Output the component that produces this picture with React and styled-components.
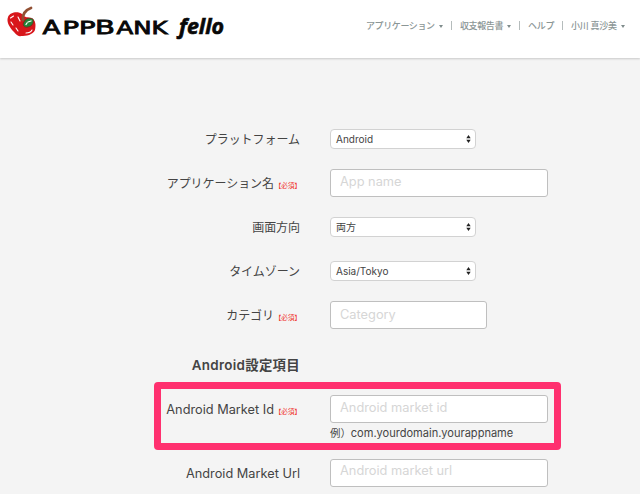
import React from "react";
import styled, { createGlobalStyle } from "styled-components";

const Global = createGlobalStyle`
  *, *::after { box-sizing: border-box; }
  body {
    margin: 0;
    background: #f4f4f4;
    color: #444;
    font-family: Inter, "Noto Sans CJK JP", sans-serif;
    overflow: hidden;
  }
`;

const Page = styled.div`
  width: 640px;
  height: 494px;
  overflow: hidden;
  background: #f4f4f4;
`;

const Header = styled.header`
  display: flex;
  justify-content: space-between;
  height: 58px;
  background: #fff;
  box-shadow: 0 1px 2px rgba(0, 0, 0, 0.18);
`;

const Logo = styled.svg`
  display: block;
  width: 240px;
  height: 50px;
  flex: none;
`;

const Nav = styled.nav`
  display: flex;
  align-items: center;
  height: 51px;
  padding-right: 15px;
  font-family: "Noto Sans CJK JP", sans-serif;
  font-size: 9px;
  font-weight: 500;
  line-height: 12px;
  color: #8b9696;
`;

const NavItem = styled.a`
  display: flex;
  align-items: center;
  justify-content: space-between;
  width: ${(p) => p.$width}px;
  white-space: nowrap;
  letter-spacing: ${(p) => p.$spacing || 0}px;
`;

const Caret = styled.i`
  margin-top: 1px;
  border: solid transparent;
  border-width: 3px 2.5px 0;
  border-top-color: #7f8c8c;
`;

const Divider = styled.i`
  width: 1px;
  height: 9px;
  margin: 0 8px;
  background: #b5bcbc;
`;

const Form = styled.form`
  padding-top: 59px;
`;

const Row = styled.div`
  position: relative;
  display: grid;
  grid-template-columns: 300px 1fr;
  grid-template-rows: 44px;
  column-gap: 30px;
  align-items: center;
`;

const HighlightedRow = styled(Row)`
  grid-template-rows: 44px 20px;

  &::after {
    content: "";
    position: absolute;
    left: 154px;
    top: -5px;
    width: 407px;
    height: 68px;
    border: 7px solid #ff306f;
    border-radius: 4px;
  }
`;

const Label = styled.label`
  display: flex;
  justify-content: flex-end;
  align-items: center;
  padding-top: 2px;
  white-space: nowrap;
  font-size: 12px;
  line-height: 16px;
  letter-spacing: -0.05px;
`;

const LatinLabel = styled(Label)`
  font-size: 12.75px;
  letter-spacing: 0;
`;

const Required = styled.span`
  width: 22px;
  margin: 2px 0 0 4px;
  font-family: "Noto Sans CJK JP", sans-serif;
  font-size: 6.6px;
  font-feature-settings: "halt";
  line-height: 8px;
  letter-spacing: 0;
  color: #f0352c;
`;

const Heading = styled.h2`
  width: 300px;
  height: 50px;
  margin: 0;
  padding-top: 20px;
  text-align: right;
  font-size: 13.4px;
  font-weight: 600;
  line-height: 17px;
  letter-spacing: 0.3px;
`;

const Select = styled.div`
  display: flex;
  align-items: center;
  justify-content: space-between;
  width: 146px;
  height: 20px;
  padding: 0 4px 1px 5px;
  border: 1px solid #d2d2d2;
  border-radius: 4px;
  background: #fff;
  font-size: 10px;
  line-height: 14px;
`;

const Input = styled.input`
  width: ${(p) => p.$width || 218}px;
  height: 28px;
  padding: 0 9px ${(p) => p.$lift ?? 4}px;
  border: 1px solid #bfbfbf;
  border-radius: 3px;
  background: #fff;
  color: #444;
  font: 12.8px Inter, "Noto Sans CJK JP", sans-serif;
  outline: 0;

  &::placeholder {
    color: #d6d6d6;
    opacity: 1;
  }
`;

const Hint = styled.p`
  grid-column: 2;
  align-self: start;
  margin: -6px 0 0;
  font-size: 10.4px;
  line-height: 16px;
  white-space: nowrap;
`;

const HintSample = styled.span`
  font-size: 11.05px;
`;

const Brand = () => (
  <Logo viewBox="0 0 240 50" aria-label="AppBank fello">
    <path d="M22 14C18 11 10 12 8 17c-2 5 2 11 6 15 2 2 4 5 7 4 5 0 12-1 14-6 1-5 1-10-4-12-3-1-6 0-9-4Z" fill="#d8161b" />
    <path d="M23 20c-1-5 2-10 8-12" fill="none" stroke="#925033" strokeWidth="2.8" strokeLinecap="round" />
    <path d="M24 22c1-3 5-5 9-3 1 3 0 7-5 8-4 1-6-2-4-5Z" fill="#258339" stroke="#742818" strokeWidth="0.8" />
    <path d="m26 24.5 1-1.5M28 22l3-1" stroke="#fff" strokeWidth="1.3" strokeLinecap="round" />
    <path d="m10.5 18 3-2M11 22l2 3M16 28l2 3M26 33c3 0 5-1 6-3M18 17l2 4" fill="none" stroke="#fff" strokeWidth="1.1" strokeLinecap="round" />
    <g fill="#080808" stroke="#080808" strokeWidth="0.8" fontFamily="DejaVu Sans, sans-serif">
      <text x="42.5" y="33.7" fontSize="19.5" textLength="18" lengthAdjust="spacingAndGlyphs">A</text>
      <text x="62.5" y="33.7" fontSize="16.8" textLength="33" lengthAdjust="spacingAndGlyphs">PP</text>
      <text x="95" y="33.7" fontSize="19.5" textLength="20" lengthAdjust="spacingAndGlyphs">B</text>
      <text x="116.5" y="33.7" fontSize="16.8" textLength="51" lengthAdjust="spacingAndGlyphs">ANK</text>
    </g>
    <text x="179" y="34" fill="#080808" stroke="#080808" strokeWidth="0.6" fontFamily="Open Sans, sans-serif" fontSize="20.5" fontWeight="700" fontStyle="italic" textLength="45" lengthAdjust="spacingAndGlyphs">fello</text>
  </Logo>
);

const Stepper = () => (
  <svg width="5" height="8" viewBox="0 0 5 8" fill="#222">
    <path d="M.3 3.2 2.5 0l2.2 3.2ZM.3 4.8h4.4L2.5 8Z" />
  </svg>
);

export default function App() {
  return (
    <>
      <Global />
      <Page>
        <Header>
          <Brand />
          <Nav>
            <NavItem $width={77} $spacing={-0.4}>アプリケーション<Caret /></NavItem>
            <Divider />
            <NavItem $width={51} $spacing={-0.4}>収支報告書<Caret /></NavItem>
            <Divider />
            <NavItem $width={26} $spacing={-0.3}>ヘルプ</NavItem>
            <Divider />
            <NavItem $width={54} $spacing={-0.2}>小川 真沙美<Caret /></NavItem>
          </Nav>
        </Header>
        <Form>
          <Row>
            <Label>プラットフォーム</Label>
            <Select>Android<Stepper /></Select>
          </Row>
          <Row>
            <Label>アプリケーション名<Required>【必須】</Required></Label>
            <Input placeholder="App name" />
          </Row>
          <Row>
            <Label>画面方向</Label>
            <Select>両方<Stepper /></Select>
          </Row>
          <Row>
            <Label>タイムゾーン</Label>
            <Select>Asia/Tokyo<Stepper /></Select>
          </Row>
          <Row>
            <Label>カテゴリ<Required>【必須】</Required></Label>
            <Input placeholder="Category" $width={157} $lift={1} />
          </Row>
          <Heading>Android設定項目</Heading>
          <HighlightedRow>
            <LatinLabel>Android Market Id<Required>【必須】</Required></LatinLabel>
            <Input placeholder="Android market id" />
            <Hint>例）<HintSample>com.yourdomain.yourappname</HintSample></Hint>
          </HighlightedRow>
          <Row>
            <LatinLabel>Android Market Url</LatinLabel>
            <Input placeholder="Android market url" $lift={5} />
          </Row>
        </Form>
      </Page>
    </>
  );
}
